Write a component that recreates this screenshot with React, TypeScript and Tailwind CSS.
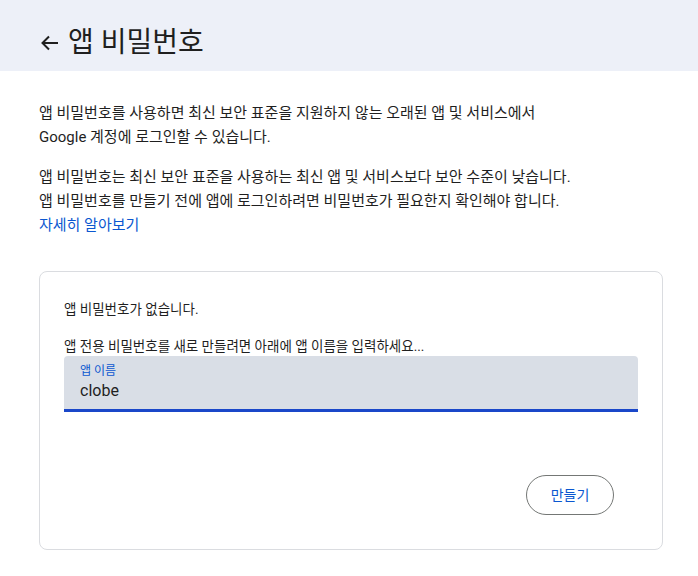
import React, { useState } from 'react';

const FONT = { fontFamily: 'Roboto, "Noto Sans CJK KR", sans-serif' };

function BackArrow() {
  return (
    <svg width="24" height="24" viewBox="0 0 24 24" fill="none" stroke="#1f1f1f" strokeWidth="2">
      <path d="M20 12H4.5" />
      <path d="M11 5.5L4.5 12l6.5 6.5" />
    </svg>
  );
}

export default function App() {
  const [appName, setAppName] = useState('clobe');

  return (
    <div className="min-h-[576px] bg-white text-[#1f1f1f]" style={FONT}>
      {/* Top bar */}
      <div className="h-[71px] bg-[#edf0f8] flex items-center pl-[38px] pt-[14px]">
        <button className="w-[24px] h-[24px] flex items-center justify-center">
          <BackArrow />
        </button>
        <h1 className="ml-[6px] text-[28px] leading-none text-[#1f1f1f]">앱 비밀번호</h1>
      </div>

      <div className="px-[39px] pt-[30px]">
        <p className="text-[15px] leading-[24px] text-[#1f1f1f]">
          앱 비밀번호를 사용하면 최신 보안 표준을 지원하지 않는 오래된 앱 및 서비스에서
          <br />
          Google 계정에 로그인할 수 있습니다.
        </p>
        <p className="mt-[16px] text-[15px] leading-[24px] text-[#1f1f1f]">
          앱 비밀번호는 최신 보안 표준을 사용하는 최신 앱 및 서비스보다 보안 수준이 낮습니다.
          <br />
          앱 비밀번호를 만들기 전에 앱에 로그인하려면 비밀번호가 필요한지 확인해야 합니다.
          <br />
          <a href="#" className="text-[#0b57d0]">자세히 알아보기</a>
        </p>

        {/* App password card */}
        <div className="mt-[34px] w-[624px] h-[279px] border border-[#dadce0] rounded-[8px] px-[24px] pt-[27px] pb-[34px] flex flex-col">
          <p className="text-[13.5px] leading-[20px]">앱 비밀번호가 없습니다.</p>
          <p className="mt-[17px] text-[13.5px] leading-[20px]">앱 전용 비밀번호를 새로 만들려면 아래에 앱 이름을 입력하세요...</p>
          <div className="h-[56px] bg-[#d9dee6] rounded-t-[4px] border-b-[3px] border-[#1a47c9] px-[16px] pt-[8px]">
            <label className="block text-[12px] leading-[14px] text-[#0b57d0]">앱 이름</label>
            <input
              value={appName}
              onChange={(e) => setAppName(e.target.value)}
              className="block w-full bg-transparent outline-none text-[16px] leading-[26px] text-[#1f1f1f]"
            />
          </div>
          <div className="mt-auto flex justify-end pr-[24px]">
            <button className="w-[88px] h-[40px] rounded-full border border-[#747775] text-[14px] text-[#0b57d0]">
              만들기
            </button>
          </div>
        </div>
      </div>
    </div>
  );
}
